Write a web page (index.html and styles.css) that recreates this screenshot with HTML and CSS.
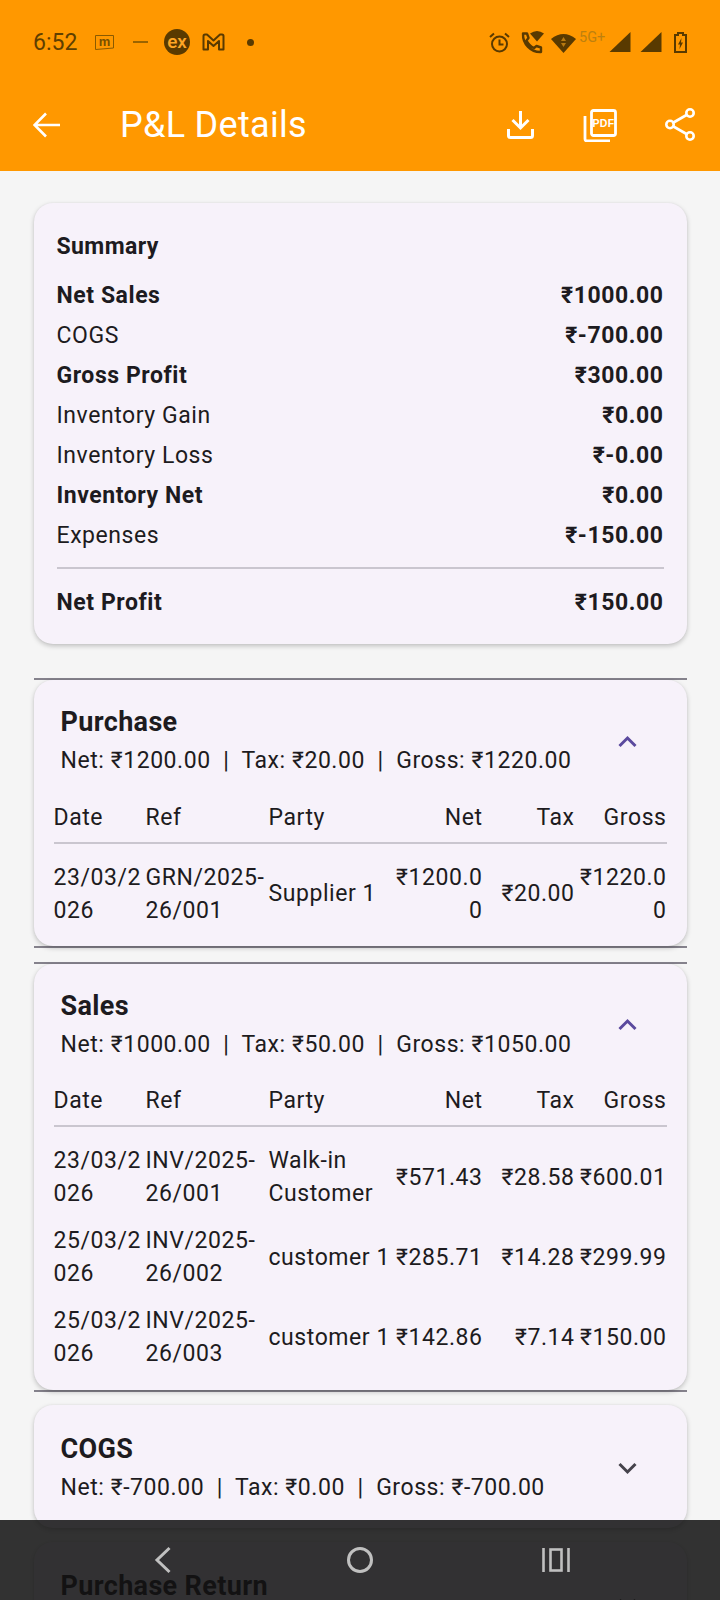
FILE: index.html
```html
<!DOCTYPE html>
<html lang="en">
<head>
<meta charset="utf-8">
<title>P&amp;L Details</title>
<link rel="stylesheet" href="styles.css">
</head>
<body>
<header class="top">
  <div class="status">
    <span class="time">6:52</span>
    <svg class="mbox" viewBox="0 0 19 17"><path d="M.5 1.500H18.500V14L.5 15.500Z" fill="none" stroke="#8a5a00" stroke-width="1"/><text x="9.500" y="12" text-anchor="middle" class="mbox-t">m</text></svg>
    <span class="dash"></span>
    <svg class="ex" viewBox="0 0 26 26"><circle cx="13" cy="13" r="13" fill="#593a00"/><text x="13" y="18.500" text-anchor="middle" class="ex-t">ex</text></svg>
    <svg class="gm" viewBox="0 0 23 18"><path d="M1.500 16.500V3Q1.500 1.500 3 1.500H5L11.500 7.500L18 1.500H20Q21.500 1.500 21.500 3V16.500H17V8L11.500 13L6 8V16.500Z" fill="none" stroke="#593a00" stroke-width="2" stroke-linejoin="round"/></svg>
    <span class="dot"></span>
    <span class="spacer"></span>
    <svg class="alarm" viewBox="0 0 21 21"><circle cx="10.500" cy="12" r="7.500" fill="none" stroke="#593a00" stroke-width="2"/><path d="M10.500 7.500V12.500H14.500M1 5L5 1.500M20 5L16 1.500" fill="none" stroke="#593a00" stroke-width="2"/></svg>
    <svg class="call" viewBox="0 0 23 24"><path d="M2 3.500H6L7.500 8L5.500 10.500C7 14 9.500 16.500 13 18L15.500 16L20 17.500V22C10 22.500 1.500 14 2 3.500Z" fill="none" stroke="#593a00" stroke-width="2.400" stroke-linejoin="round"/><path d="M9 3.500Q16 -1.500 23 3.500L16 11.500Z" fill="#593a00"/></svg>
    <svg class="wifi" viewBox="0 0 25 21"><path d="M0 7Q12.500 -3 25 7L12.500 21Z" fill="#593a00"/><path d="M12.500 5L15 9H10ZM12.500 15L10 11H15Z" fill="#b87a10"/></svg>
    <span class="fiveg">5G+</span>
    <svg class="sig" viewBox="0 0 21 20"><path d="M0 20L21 0V20Z" fill="#593a00"/></svg>
    <svg class="sig sig2" viewBox="0 0 21 20"><path d="M0 20L21 0V20Z" fill="#593a00"/></svg>
    <svg class="bat" viewBox="0 0 13 21"><path d="M4 1H9V3H12V20H1V3H4Z" fill="none" stroke="#593a00" stroke-width="2"/><path d="M7.500 6L4 12.500H6L5.500 17L9 10.500H7Z" fill="#593a00"/></svg>
  </div>
  <div class="bar">
    <svg class="back" viewBox="0 0 28 26"><path d="M27 13H2M13 1.500L1.500 13L13 24.500" fill="none" stroke="#fff" stroke-width="2.600"/></svg>
    <h1>P&amp;L Details</h1>
    <svg class="dl" viewBox="0 0 27 28"><path d="M13.500 0V16M5.500 9L13.500 17L21.500 9" fill="none" stroke="#fff" stroke-width="3"/><path d="M1.500 18V24.500Q1.500 26.500 3.500 26.500H23.500Q25.500 26.500 25.500 24.500V18" fill="none" stroke="#fff" stroke-width="3"/></svg>
    <svg class="pdf" viewBox="0 0 34 34"><rect x="8.500" y="2.500" width="24" height="25" rx="2" fill="none" stroke="#fff" stroke-width="2.800"/><path d="M2 8V31Q2 33 4 33H27" fill="none" stroke="#fff" stroke-width="2.800"/><text x="20.500" y="19" text-anchor="middle" class="pdf-t">PDF</text></svg>
    <svg class="share" viewBox="0 0 32 34"><path d="M5 16.500L25 5M5 16.500L25 28" stroke="#fff" stroke-width="2.600"/><circle cx="5" cy="16.500" r="3.700" fill="#ff9800" stroke="#fff" stroke-width="2.600"/><circle cx="25" cy="5" r="3.700" fill="#ff9800" stroke="#fff" stroke-width="2.600"/><circle cx="25" cy="28" r="3.700" fill="#ff9800" stroke="#fff" stroke-width="2.600"/></svg>
  </div>
</header>

<main class="content">
  <section class="card summary">
    <h2>Summary</h2>
    <div class="row strong"><span>Net Sales</span><span class="val">₹1000.00</span></div>
    <div class="row"><span>COGS</span><span class="val">₹-700.00</span></div>
    <div class="row strong"><span>Gross Profit</span><span class="val">₹300.00</span></div>
    <div class="row"><span>Inventory Gain</span><span class="val">₹0.00</span></div>
    <div class="row"><span>Inventory Loss</span><span class="val">₹-0.00</span></div>
    <div class="row strong"><span>Inventory Net</span><span class="val">₹0.00</span></div>
    <div class="row"><span>Expenses</span><span class="val">₹-150.00</span></div>
    <hr class="sep">
    <div class="row strong"><span>Net Profit</span><span class="val">₹150.00</span></div>
  </section>

  <section class="open">
    <div class="card">
      <div class="head">
        <div class="head-text">
          <h3>Purchase</h3>
          <p>Net: ₹1200.00 &nbsp;|&nbsp; Tax: ₹20.00 &nbsp;|&nbsp; Gross: ₹1220.00</p>
        </div>
        <svg class="chev" viewBox="0 0 19 13"><path d="M1.500 11L9.500 3L17.500 11" fill="none" stroke="#5b4a9e" stroke-width="3"/></svg>
      </div>
      <div class="tbl">
        <div class="tr th"><span>Date</span><span>Ref</span><span>Party</span><span class="r">Net</span><span class="r">Tax</span><span class="r">Gross</span></div>
        <div class="tr first-row"><span>23/03/2026</span><span>GRN/2025-<wbr>26/001</span><span>Supplier 1</span><span class="r">₹1200.00</span><span class="r">₹20.00</span><span class="r">₹1220.00</span></div>
      </div>
    </div>
  </section>

  <section class="open">
    <div class="card">
      <div class="head">
        <div class="head-text">
          <h3>Sales</h3>
          <p>Net: ₹1000.00 &nbsp;|&nbsp; Tax: ₹50.00 &nbsp;|&nbsp; Gross: ₹1050.00</p>
        </div>
        <svg class="chev" viewBox="0 0 19 13"><path d="M1.500 11L9.500 3L17.500 11" fill="none" stroke="#5b4a9e" stroke-width="3"/></svg>
      </div>
      <div class="tbl">
        <div class="tr th"><span>Date</span><span>Ref</span><span>Party</span><span class="r">Net</span><span class="r">Tax</span><span class="r">Gross</span></div>
        <div class="tr first-row"><span>23/03/2026</span><span>INV/2025-<wbr>26/001</span><span>Walk-in Customer</span><span class="r">₹571.43</span><span class="r">₹28.58</span><span class="r">₹600.01</span></div>
        <div class="tr"><span>25/03/2026</span><span>INV/2025-<wbr>26/002</span><span>customer 1</span><span class="r">₹285.71</span><span class="r">₹14.28</span><span class="r">₹299.99</span></div>
        <div class="tr"><span>25/03/2026</span><span>INV/2025-<wbr>26/003</span><span>customer 1</span><span class="r">₹142.86</span><span class="r">₹7.14</span><span class="r">₹150.00</span></div>
      </div>
    </div>
  </section>

  <section class="card shut">
    <div class="head">
      <div class="head-text">
        <h3>COGS</h3>
        <p>Net: ₹-700.00 &nbsp;|&nbsp; Tax: ₹0.00 &nbsp;|&nbsp; Gross: ₹-700.00</p>
      </div>
      <svg class="chev" viewBox="0 0 19 13"><path d="M1.500 2L9.500 10L17.500 2" fill="none" stroke="#45434b" stroke-width="3"/></svg>
    </div>
  </section>

  <section class="card shut">
    <div class="head">
      <div class="head-text">
        <h3>Purchase Return</h3>
      </div>
      <svg class="chev" viewBox="0 0 19 13"><path d="M1.500 2L9.500 10L17.500 2" fill="none" stroke="#45434b" stroke-width="3"/></svg>
    </div>
  </section>
</main>

<nav class="nav">
  <svg class="n-back" viewBox="0 0 18 28"><path d="M15.500 2L3 14L15.500 26" fill="none" stroke="#c0c0c0" stroke-width="3"/></svg>
  <svg class="n-home" viewBox="0 0 28 28"><circle cx="14" cy="14" r="11.500" fill="none" stroke="#c0c0c0" stroke-width="3"/></svg>
  <svg class="n-rec" viewBox="0 0 28 24"><path d="M1.500 0V24M26.500 0V24" stroke="#c0c0c0" stroke-width="2.600"/><rect x="8.500" y="1.500" width="11" height="21" fill="none" stroke="#c0c0c0" stroke-width="2.600"/></svg>
</nav>
</body>
</html>
```

FILE: styles.css
```css
* { box-sizing: border-box; }
html, body { margin: 0; padding: 0; }
body {
  width: 720px;
  height: 1600px;
  overflow: hidden;
  position: relative;
  background: #f5f5f5;
  color: #1d1b20;
  font-family: Roboto, "Noto Sans", sans-serif;
  font-size: 23px;
  letter-spacing: 0.56px;
}
svg { display: block; flex: none; }
.top { background: #ff9800; height: 171px; }
.status { height: 84px; display: flex; align-items: center; padding: 0 33px; }
.time { font-size: 23px; color: #5f3f00; letter-spacing: 0; margin-right: 17px; width: 45px; }
.mbox { width: 19px; height: 17px; margin-right: 19px; }
.mbox-t { font-family: "Liberation Sans", sans-serif; font-weight: 700; font-size: 13px; fill: #7a5000; letter-spacing: 0; }
.dash { width: 15px; height: 2px; background: #9a6400; margin-right: 16px; }
.ex { width: 26px; height: 26px; margin-right: 12px; }
.ex-t { font-family: Roboto, sans-serif; font-size: 19px; font-weight: 500; fill: #ffa726; letter-spacing: 0; }
.gm { width: 23px; height: 18px; margin-right: 21.5px; }
.dot { width: 7px; height: 7px; border-radius: 50%; background: #593a00; }
.spacer { flex: 1; }
.alarm { width: 21px; height: 21px; margin-right: 11px; }
.call { width: 23px; height: 24px; margin-right: 7px; }
.wifi { width: 25px; height: 21px; margin-right: 3px; }
.fiveg { font-size: 14.5px; color: #bd800f; letter-spacing: 0; width: 28px; margin-top: -10px; margin-right: 2px; }
.sig { width: 22px; height: 20px; margin-right: 9px; }
.sig2 { margin-right: 12px; }
.bat { width: 13px; height: 21px; }
.bar { height: 87px; display: flex; align-items: center; padding: 0 23px 6px 33px; }
.back { width: 28px; height: 26px; margin-right: 59px; }
h1 { margin: 0; flex: 1; font-size: 36px; font-weight: 400; color: #fff; letter-spacing: 0.3px; }
.dl { width: 27px; height: 28px; margin-right: 49px; }
.pdf { width: 34px; height: 34px; margin-right: 48px; }
.share { width: 32px; height: 34px; }
.pdf-t { font-family: "Liberation Sans Narrow", "Liberation Sans", sans-serif; font-size: 10.5px; font-weight: 700; fill: #fff; letter-spacing: 0.4px; }

.content { padding: 32px 33.5px 0; display: flex; flex-direction: column; }
.card {
  background: #f7f2fa;
  border-radius: 19px;
  box-shadow: 0 2px 5px rgba(0, 0, 0, .22), 0 0 2px rgba(0, 0, 0, .05);
}
.summary { padding: 26px 23px 0; height: 441px; margin-bottom: 34px; }
h2 { margin: 0 0 10px; font-size: 23px; line-height: 36px; font-weight: 700; letter-spacing: 0.4px; }
.row { height: 40px; display: flex; justify-content: space-between; align-items: center; }
.strong { font-weight: 700; }
.val { font-weight: 700; }
.sep { border: 0; border-top: 2px solid #cac6cf; margin: 12px 0 13px; }

.open { border-top: 2px solid #85828c; border-bottom: 2px solid #85828c; margin-bottom: 13.5px; }
.head { display: flex; align-items: center; justify-content: space-between; min-height: 99px; padding: 23px 50px 0 27px; }
.head-text { min-width: 0; align-self: flex-start; }
h3 { margin: 0 0 2px; font-size: 27px; line-height: 38px; font-weight: 700; letter-spacing: 0.35px; }
.head p { margin: 0; line-height: 36px; white-space: pre; }
.chev { width: 19px; height: 13px; }
.tbl { padding: 0 20px 12.5px; }
.tr { display: grid; grid-template-columns: 92px 123px 125px 89px 92px 92px; align-items: center; min-height: 80px; line-height: 33px; }
.tr > span { overflow-wrap: anywhere; }
.th { min-height: 0; height: 49px; margin-top: 15.5px; border-bottom: 2px solid #cac6cf; line-height: 46px; align-items: start; }
.first-row { margin-top: 10px; }
.r { text-align: right; }
.shut { margin-bottom: 14px; height: 123px; flex: none; }
.shut .head { padding-top: 25px; }

.nav {
  position: absolute;
  left: 0; right: 0; bottom: 0;
  height: 80px;
  background: rgba(18, 18, 18, .86);
}
.nav svg { position: absolute; top: 26px; }
.n-back { left: 154px; width: 18px; height: 28px; }
.n-home { left: 346px; width: 28px; height: 28px; }
.n-rec { left: 542px; width: 28px; height: 24px; margin-top: 2px; }
```
